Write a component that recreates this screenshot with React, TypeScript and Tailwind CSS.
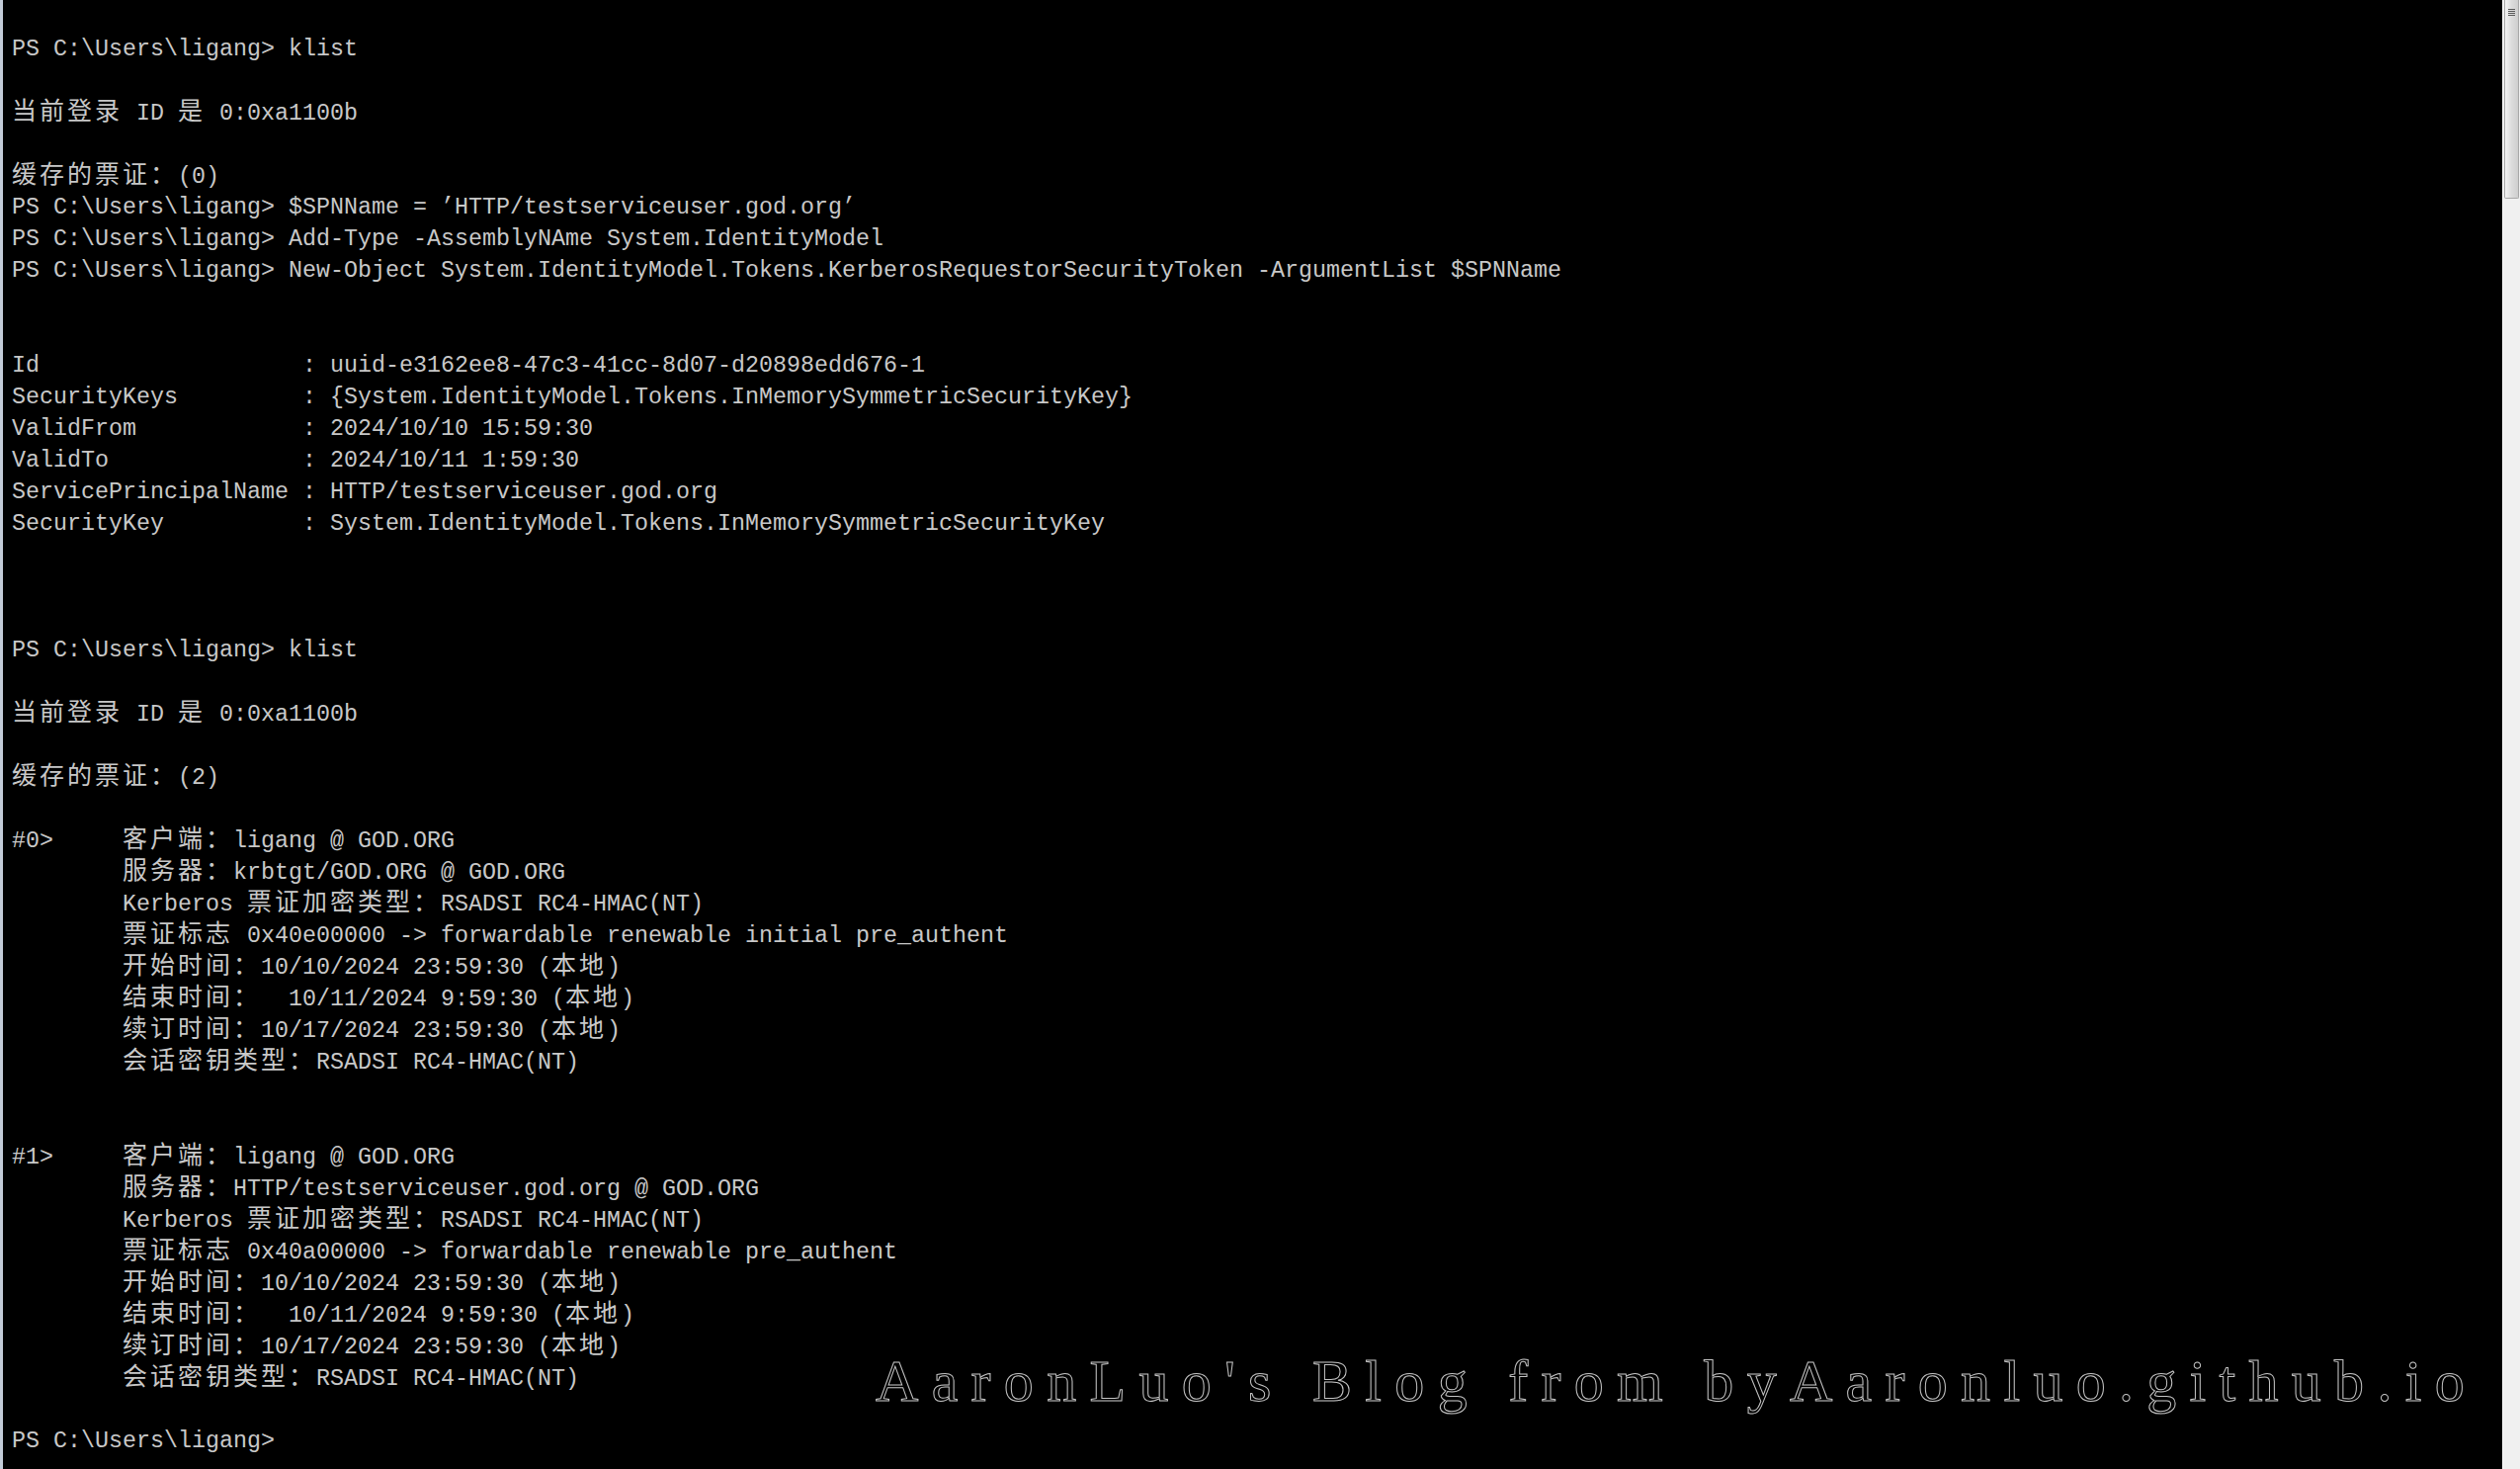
import React from 'react';

// console buffer, one string per row
const PROMPT = 'PS C:\\Users\\ligang> ';

const props: [string, string][] = [
  ['Id', 'uuid-e3162ee8-47c3-41cc-8d07-d20898edd676-1'],
  ['SecurityKeys', '{System.IdentityModel.Tokens.InMemorySymmetricSecurityKey}'],
  ['ValidFrom', '2024/10/10 15:59:30'],
  ['ValidTo', '2024/10/11 1:59:30'],
  ['ServicePrincipalName', 'HTTP/testserviceuser.god.org'],
  ['SecurityKey', 'System.IdentityModel.Tokens.InMemorySymmetricSecurityKey'],
];

const ticket = (n: number, server: string, flags: string) => [
  `#${n}>     客户端：ligang @ GOD.ORG`,
  `        服务器：${server}`,
  '        Kerberos 票证加密类型：RSADSI RC4-HMAC(NT)',
  `        票证标志 ${flags}`,
  '        开始时间：10/10/2024 23:59:30 (本地)',
  '        结束时间：  10/11/2024 9:59:30 (本地)',
  '        续订时间：10/17/2024 23:59:30 (本地)',
  '        会话密钥类型：RSADSI RC4-HMAC(NT)',
];

const lines: string[] = [
  PROMPT + 'klist',
  '',
  '当前登录 ID 是 0:0xa1100b',
  '',
  '缓存的票证：(0)',
  PROMPT + '$SPNName = ’HTTP/testserviceuser.god.org’',
  PROMPT + 'Add-Type -AssemblyNAme System.IdentityModel',
  PROMPT + 'New-Object System.IdentityModel.Tokens.KerberosRequestorSecurityToken -ArgumentList $SPNName',
  '',
  '',
  ...props.map(([k, v]) => k.padEnd(21) + ': ' + v),
  '',
  '',
  '',
  PROMPT + 'klist',
  '',
  '当前登录 ID 是 0:0xa1100b',
  '',
  '缓存的票证：(2)',
  '',
  ...ticket(0, 'krbtgt/GOD.ORG @ GOD.ORG', '0x40e00000 -> forwardable renewable initial pre_authent'),
  '',
  '',
  ...ticket(1, 'HTTP/testserviceuser.god.org @ GOD.ORG', '0x40a00000 -> forwardable renewable pre_authent'),
  '',
  PROMPT,
];

const CJK = /([\u2e80-\u9fff\uff00-\uffef\u3000-\u303f]+)/;

// wide glyphs take two cells (28px), narrow ones one cell (14px)
const ConsoleLine = ({ text }: { text: string }) => (
  <div className="h-8 whitespace-pre">
    {text.split(CJK).map((part, i) =>
      i % 2 === 1 ? (
        <span
          key={i}
          className="font-['Noto_Sans_CJK_SC','Noto_Sans_CJK_JP',sans-serif] text-[25px] tracking-[3px] leading-none"
        >
          {part}
        </span>
      ) : (
        <span key={i}>{part}</span>
      )
    )}
  </div>
);

const Scrollbar = () => (
  <div className="w-[18px] shrink-0 bg-[#f0f0f0] border-l border-[#fafafa]">
    <div className="h-[201px] mx-[1px] rounded-b-[2px] border border-t-0 border-[#a8a8a8] bg-gradient-to-r from-[#f4f4f4] via-[#dcdcdc] to-[#cfcfcf] pt-[9px] flex flex-col items-center gap-[1px]">
      <div className="w-[7px] h-[1px] bg-[#5a5a5a]" />
      <div className="w-[7px] h-[1px] bg-[#5a5a5a]" />
      <div className="w-[7px] h-[1px] bg-[#5a5a5a]" />
      <div className="w-[7px] h-[1px] bg-[#5a5a5a]" />
    </div>
  </div>
);

export default function App() {
  return (
    <div className="relative flex w-[2550px] h-[1486px] overflow-hidden bg-black">
      <div className="w-[3px] shrink-0 bg-[#c3ccd8]" />

      <div className="flex-1 min-w-0 pl-[9px] pt-[34px] text-[#c8c8c8] font-['Liberation_Mono','Noto_Sans_CJK_SC',monospace] text-[23.33px] leading-8">
        {lines.map((l, i) => (
          <ConsoleLine key={i} text={l} />
        ))}
      </div>

      <Scrollbar />

      {/* blog watermark */}
      <div className="absolute left-[886px] top-[1367px] whitespace-nowrap font-['Liberation_Serif',serif] text-[60px] leading-none tracking-[13.3px] text-transparent [-webkit-text-stroke:1px_#c4c4c4]">
        AaronLuo's Blog from byAaronluo.github.io
      </div>
    </div>
  );
}
